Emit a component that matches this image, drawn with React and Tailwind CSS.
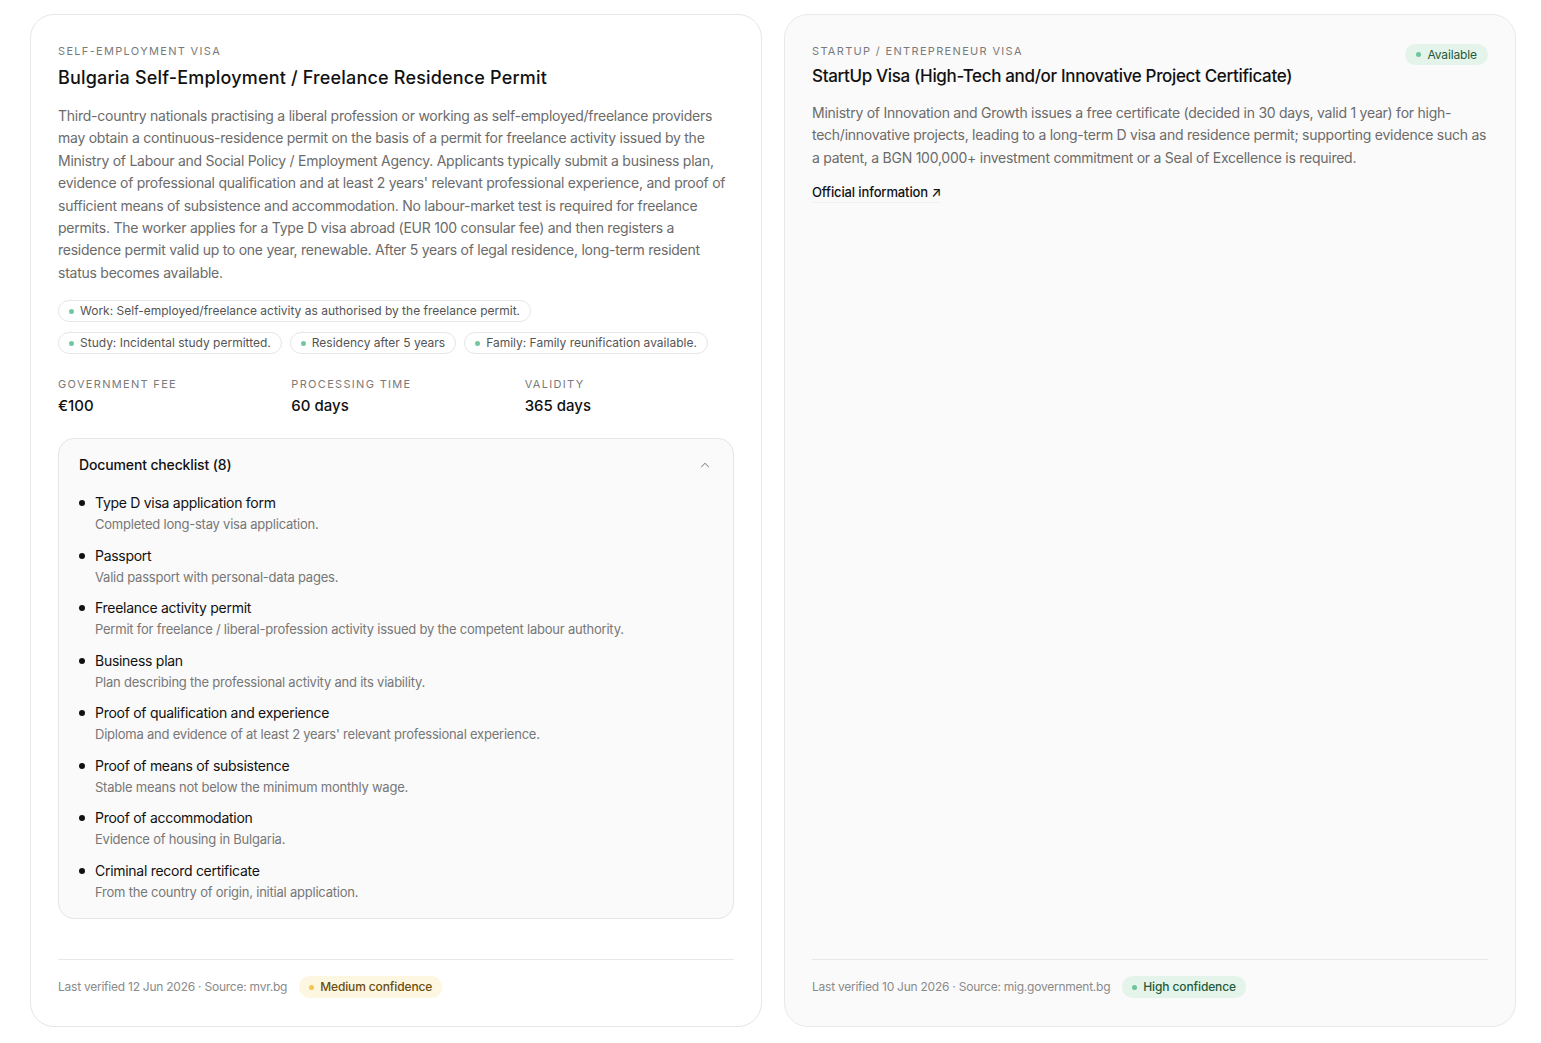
import { ChevronUp } from "lucide-react";

const font = { fontFamily: "Inter, 'Noto Sans', sans-serif" };

const chips = [
  "Work: Self-employed/freelance activity as authorised by the freelance permit.",
  "Study: Incidental study permitted.",
  "Residency after 5 years",
  "Family: Family reunification available.",
];

const stats = [
  { label: "Government fee", value: "€100" },
  { label: "Processing time", value: "60 days" },
  { label: "Validity", value: "365 days" },
];

const docs = [
  ["Type D visa application form", "Completed long-stay visa application."],
  ["Passport", "Valid passport with personal-data pages."],
  [
    "Freelance activity permit",
    "Permit for freelance / liberal-profession activity issued by the competent labour authority.",
  ],
  ["Business plan", "Plan describing the professional activity and its viability."],
  [
    "Proof of qualification and experience",
    "Diploma and evidence of at least 2 years' relevant professional experience.",
  ],
  ["Proof of means of subsistence", "Stable means not below the minimum monthly wage."],
  ["Proof of accommodation", "Evidence of housing in Bulgaria."],
  ["Criminal record certificate", "From the country of origin, initial application."],
];

const Eyebrow = ({ children }) => (
  <p className="text-[11px] leading-4 uppercase tracking-[0.12em] text-[#7a7a7a]">{children}</p>
);

const Footer = ({ date, source, tone }) => {
  const badge =
    tone === "medium"
      ? { box: "bg-[#fdf6e0] text-[#6b4d0e]", dot: "bg-[#f3c84b]", label: "Medium confidence" }
      : { box: "bg-[#e5f4ea] text-[#245a3a]", dot: "bg-[#6cc49a]", label: "High confidence" };
  return (
    <div className="mt-auto border-t border-[#e8e8e8] pt-4 flex items-center gap-3">
      <span className="text-xs tracking-[-0.02em] text-[#8a8a8a]">
        Last verified {date} · Source: {source}
      </span>
      <span
        className={`inline-flex items-center gap-1.5 rounded-full px-2.5 h-[22px] text-xs tracking-[-0.01em] font-medium ${badge.box}`}
      >
        <span className={`w-[5px] h-[5px] rounded-full ${badge.dot}`} />
        {badge.label}
      </span>
    </div>
  );
};

const LeftCard = () => (
  <div className="rounded-3xl border border-[#e6e6e6] bg-white px-[27px] pt-7 pb-7 flex flex-col">
    <Eyebrow>Self-employment visa</Eyebrow>
    <h2 className="mt-[5px] text-lg leading-7 font-medium tracking-[0.01em] text-[#111]">
      Bulgaria Self-Employment / Freelance Residence Permit
    </h2>
    <p className="mt-[13px] text-sm leading-[22.4px] tracking-[-0.018em] text-[#6b6b6b]">
      Third-country nationals practising a liberal profession or working as self-employed/freelance
      providers may obtain a continuous-residence permit on the basis of a permit for freelance
      activity issued by the Ministry of Labour and Social Policy / Employment Agency. Applicants
      typically submit a business plan, evidence of professional qualification and at least 2
      years' relevant professional experience, and proof of sufficient means of subsistence and
      accommodation. No labour-market test is required for freelance permits. The worker applies
      for a Type D visa abroad (EUR 100 consular fee) and then registers a residence permit valid
      up to one year, renewable. After 5 years of legal residence, long-term resident status
      becomes available.
    </p>
    <div className="mt-4 flex flex-wrap gap-x-2 gap-y-2.5">
      {chips.map((c) => (
        <span
          key={c}
          className="inline-flex items-center gap-1.5 rounded-full border border-[#e6e6e6] px-2.5 h-[22px] text-xs text-[#555]"
        >
          <span className="w-[5px] h-[5px] rounded-full bg-[#72c8a0]" />
          {c}
        </span>
      ))}
    </div>
    <div className="mt-[22px] grid grid-cols-3 gap-6">
      {stats.map((s) => (
        <div key={s.label}>
          <p className="text-[11px] leading-4 uppercase tracking-[0.12em] text-[#7a7a7a]">
            {s.label}
          </p>
          <p className="mt-0.5 text-[15px] leading-6 font-medium text-[#111]">{s.value}</p>
        </div>
      ))}
    </div>
    <div className="mt-5 rounded-2xl border border-[#e6e6e6] bg-[#fafafa] px-5 pt-4 pb-4">
      <div className="flex items-center justify-between">
        <span className="text-sm leading-5 font-medium tracking-[-0.01em] text-[#111]">
          Document checklist (8)
        </span>
        <ChevronUp size={14} className="text-[#888] mr-[1px]" strokeWidth={1.75} />
      </div>
      <ul className="mt-[17px] flex flex-col gap-[10px]">
        {docs.map(([t, d]) => (
          <li key={t} className="flex items-start gap-[10px]">
            <span className="mt-2 w-[6px] h-[6px] shrink-0 rounded-full bg-[#111]" />
            <div>
              <p className="text-sm leading-[21px] tracking-[-0.02em] text-[#111]">{t}</p>
              <p className="mt-0.5 text-[13px] leading-[19.5px] tracking-[-0.017em] text-[#777]">
                {d}
              </p>
            </div>
          </li>
        ))}
      </ul>
    </div>
    <div className="h-10 shrink-0" />
    <Footer date="12 Jun 2026" source="mvr.bg" tone="medium" />
  </div>
);

const RightCard = () => (
  <div className="rounded-3xl border border-[#e9e9e9] bg-[#fafafa] px-[27px] pt-7 pb-7 flex flex-col">
    <div className="flex items-start justify-between gap-4">
      <div>
        <Eyebrow>Startup / entrepreneur visa</Eyebrow>
        <h2 className="mt-[3px] text-[17px] leading-7 font-medium tracking-[-0.02em] text-[#111]">
          StartUp Visa (High-Tech and/or Innovative Project Certificate)
        </h2>
      </div>
      <span className="inline-flex items-center gap-1.5 rounded-full bg-[#e5f4ea] px-[11px] h-[21px] text-xs tracking-[-0.01em] text-[#245a3a] mt-[1px]">
        <span className="w-[5px] h-[5px] rounded-full bg-[#6cc49a]" />
        Available
      </span>
    </div>
    <p className="mt-3 text-sm leading-[22.4px] tracking-[-0.018em] text-[#6b6b6b]">
      Ministry of Innovation and Growth issues a free certificate (decided in 30 days, valid 1
      year) for high-tech/innovative projects, leading to a long-term D visa and residence permit;
      supporting evidence such as a patent, a BGN 100,000+ investment commitment or a Seal of
      Excellence is required.
    </p>
    <a className="mt-[13px] self-start text-[13px] leading-5 font-medium tracking-[-0.01em] text-[#111] border-b border-[#f0f0f0]">
      Official information ↗
    </a>
    <Footer date="10 Jun 2026" source="mig.government.bg" tone="high" />
  </div>
);

export default function App() {
  return (
    <div className="min-h-screen bg-white pl-[30px] pr-[25px] pt-[14px] pb-[17px]" style={font}>
      <div className="grid grid-cols-2 gap-[22px]">
        <LeftCard />
        <RightCard />
      </div>
    </div>
  );
}
